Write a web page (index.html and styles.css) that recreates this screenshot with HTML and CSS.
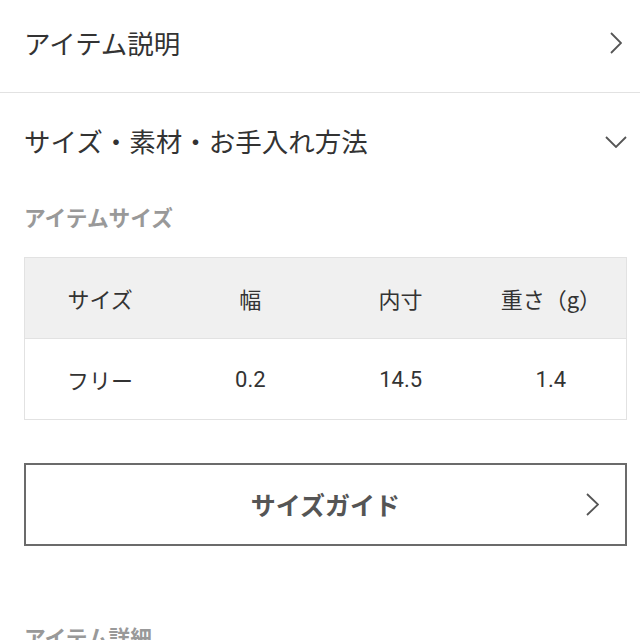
FILE: index.html
```html
<!DOCTYPE html>
<html lang="ja">
<head>
<meta charset="utf-8">
<link rel="stylesheet" href="styles.css">
</head>
<body>
<div class="page">
  <div class="acc acc-first">
    <span class="acc-title">アイテム説明</span>
    <svg class="chev-right" width="12" height="22" viewBox="0 0 12 22"><polyline points="1,1 11,11 1,21" fill="none" stroke="#555" stroke-width="1.8"/></svg>
  </div>
  <div class="acc acc-open">
    <span class="acc-title">サイズ・素材・お手入れ方法</span>
    <svg class="chev-down" width="22" height="12" viewBox="0 0 22 12"><polyline points="1,1 11,11 21,1" fill="none" stroke="#555" stroke-width="1.8"/></svg>
  </div>
  <div class="sub">アイテムサイズ</div>
  <div class="size-table">
    <div class="tr th">
      <div class="td">サイズ</div>
      <div class="td">幅</div>
      <div class="td">内寸</div>
      <div class="td">重さ（g）</div>
    </div>
    <div class="tr">
      <div class="td">フリー</div>
      <div class="td">0.2</div>
      <div class="td">14.5</div>
      <div class="td">1.4</div>
    </div>
  </div>
  <div class="guide-btn">
    <span class="guide-text">サイズガイド</span>
    <svg class="chev-btn" width="13" height="23" viewBox="0 0 13 23"><polyline points="1,1 12,11.5 1,22" fill="none" stroke="#555" stroke-width="1.8"/></svg>
  </div>
  <div class="sub sub-detail">アイテム詳細</div>
</div>
</body>
</html>
```

FILE: styles.css
```css
html, body {
  margin: 0;
  padding: 0;
  background: #fff;
}
body {
  font-family: "Helvetica Neue", Roboto, "Liberation Sans", "Noto Sans CJK JP", sans-serif;
  color: #333;
  overflow: hidden;
}
.page {
  padding: 0 13px 0 24px;
}
.acc {
  display: flex;
  align-items: center;
  justify-content: space-between;
}
.acc-first {
  height: 92px;
  border-bottom: 1px solid #e2e2e2;
  margin: 0 -13px 0 -24px;
  padding: 0 18px 0 24px;
}
.acc-first .acc-title {
  margin-top: -5px;
}
.acc-first .chev-right {
  margin-top: -6px;
}
.acc-open {
  height: 100px;
  padding-right: 0;
}
.acc-open .acc-title {
  margin-top: -3px;
}
.acc-open .chev-down {
  margin-top: -2px;
}
.acc-title {
  font-family: "Noto Sans CJK JP", sans-serif;
  font-size: 26.5px;
  line-height: 1;
  color: #333;
}
.sub {
  font-family: "Noto Sans CJK JP", sans-serif;
  font-size: 21.7px;
  font-weight: 700;
  line-height: 21px;
  color: #999;
  margin-top: 13px;
}
.size-table {
  margin-top: 30px;
  border: 1px solid #e2e2e2;
}
.tr {
  display: grid;
  grid-template-columns: repeat(4, 1fr);
  height: 80px;
  align-items: center;
}
.th {
  background: #f0f0f0;
  border-bottom: 1px solid #e2e2e2;
}
.td {
  text-align: center;
  font-size: 22px;
  color: #333;
  font-family: "Helvetica Neue", Roboto, "Noto Sans CJK JP", sans-serif;
}
.th .td {
  font-family: "Noto Sans CJK JP", sans-serif;
}
.guide-btn {
  margin-top: 43px;
  height: 79px;
  border: 2px solid #6b6b6b;
  display: flex;
  align-items: center;
  justify-content: center;
  position: relative;
}
.guide-text {
  font-family: "Noto Sans CJK JP", sans-serif;
  font-size: 25px;
  font-weight: 700;
  color: #555;
  line-height: 1;
}
.chev-btn {
  position: absolute;
  right: 26px;
  top: 28px;
}
.sub-detail {
  margin-top: 80px;
}
```
